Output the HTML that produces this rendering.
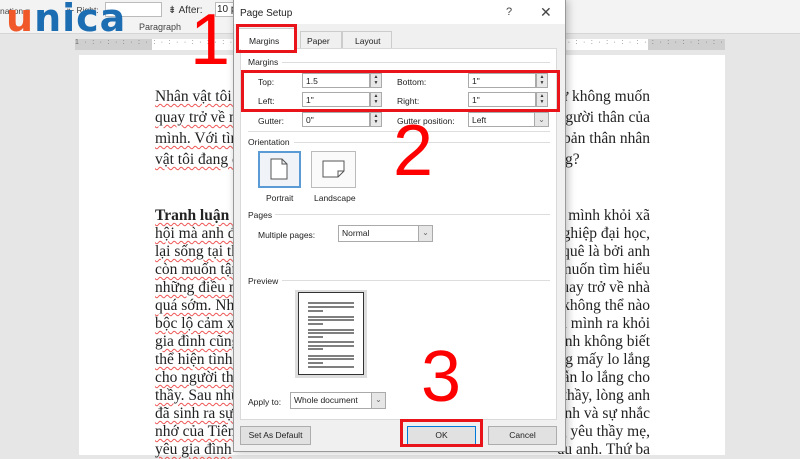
<!DOCTYPE html>
<html><head><meta charset="utf-8"><style>
*{margin:0;padding:0;box-sizing:border-box}
body{width:800px;height:450px;overflow:hidden;position:relative;background:#e6e6e6;font-family:"Liberation Sans",sans-serif}
.a{position:absolute}
.ui{font-family:"Liberation Sans",sans-serif;font-size:8.5px;color:#222;white-space:nowrap}
.doc{font-family:"Liberation Serif",serif;font-size:15.5px;color:#222;white-space:nowrap;line-height:18px;text-decoration:underline wavy #e55;text-decoration-thickness:0.5px;text-underline-offset:2px}
.inp{position:absolute;background:#fff;border:1px solid #aaa;height:15px;font-size:8.5px;padding:2px 3px;color:#222}
.sp{position:absolute;width:12px;height:15px;background:#e8e8e8;border:1px solid #aaa;font-size:5px;line-height:6px;text-align:center;color:#333}
.dd{position:absolute;width:14px;top:0;right:0;bottom:0;background:#e6e6e6;border-left:1px solid #aaa;font-size:8px;text-align:center;color:#666;line-height:14px}
.sec{position:absolute;font-size:8.5px;color:#222;background:#fff;padding-right:4px}
.hr{position:absolute;height:1px;background:#ddd}
.btn{position:absolute;height:19px;background:#e1e1e1;border:1px solid #adadad;font-size:8.5px;text-align:center;line-height:17px;color:#222}
.red{position:absolute;border:3px solid #e8141a}
.num{position:absolute;color:#f00;font-family:"Liberation Sans",sans-serif;font-size:72px;line-height:1}
</style></head><body>
<div class="a" style="left:0;top:0;width:800px;height:34px;background:#f3f3f3;border-bottom:1px solid #d6d6d6"></div>
<div class="a ui" style="left:0;top:6px;color:#444">nation ▾</div>
<div class="a ui" style="left:67px;top:5px;color:#444">⇤ Right:</div>
<div class="a" style="left:105px;top:2px;width:57px;height:15px;background:#fff;border:1px solid #bbb"></div>
<div class="a ui" style="left:168px;top:5px;font-size:10px;color:#333">⇟ After:</div>
<div class="a" style="left:215px;top:2px;width:20px;height:15px;background:#fff;border:1px solid #bbb"></div>
<div class="a ui" style="left:217px;top:4px;font-size:10px">10 p</div>
<div class="a ui" style="left:139px;top:22px;font-size:9px;color:#444">Paragraph</div>
<div class="a" style="left:6px;top:-4px;font-size:38px;font-weight:bold;font-family:'DejaVu Sans',sans-serif;letter-spacing:1px"><span style="color:#f0582a">u</span><span style="color:#1c6db2">nica</span></div>
<div class="a" style="left:75px;top:39px;width:650px;height:11px;background:#fff"></div>
<div class="a" style="left:75px;top:39px;width:77px;height:11px;background:#cfcfcf"></div>
<div class="a" style="left:648px;top:39px;width:77px;height:11px;background:#cfcfcf"></div>
<div class="a ui" style="left:75px;top:39px;width:650px;font-size:7px;color:#666;letter-spacing:5.5px;overflow:hidden">1·:·:·:·:·:·:··:·:·:·:·1·:·:·:·:·:·:·:·:·:·:·:·:·:·:·:·:·:·:·:·:·:·:·:·:·:·:·:·:·:·:··:·:6·:·:·:·:·7·:·:</div>
<div class="a" style="left:79px;top:55px;width:646px;height:400px;background:#fff"></div>
<div class="a" style="left:155px;top:88px;width:495px">
<div class="doc" style="position:relative;height:21px">Nhân vật tôi trở<span style="position:absolute;right:0">ừ không muốn</span></div>
<div class="doc" style="position:relative;height:21px">quay trở về nhà<span style="position:absolute;right:0">người thân của</span></div>
<div class="doc" style="position:relative;height:21px">mình. Với tình<span style="position:absolute;right:0">g bản thân nhân</span></div>
<div class="doc" style="position:relative;height:21px">vật tôi đang cả<span style="position:absolute;left:410px">g?</span></div>
</div>
<div class="a" style="left:155px;top:207px;width:495px">
<div class="doc" style="position:relative;height:18px"><b>Tranh luận 1</b><span style="position:absolute;right:0">h mình khỏi xã</span></div>
<div class="doc" style="position:relative;height:18px">hội mà anh đa<span style="position:absolute;right:0">nghiệp đại học,</span></div>
<div class="doc" style="position:relative;height:18px">lại sống tại thà<span style="position:absolute;right:0">ề quê là bởi anh</span></div>
<div class="doc" style="position:relative;height:18px">còn muốn tận<span style="position:absolute;right:0">muốn tìm hiểu</span></div>
<div class="doc" style="position:relative;height:18px">những điều mà<span style="position:absolute;right:0">quay trở về nhà</span></div>
<div class="doc" style="position:relative;height:18px">quá sớm. Nhâ<span style="position:absolute;right:0">, không thể nào</span></div>
<div class="doc" style="position:relative;height:18px">bộc lộ cảm xú<span style="position:absolute;right:0">ch mình ra khỏi</span></div>
<div class="doc" style="position:relative;height:18px">gia đình cũng<span style="position:absolute;right:0">anh không biết</span></div>
<div class="doc" style="position:relative;height:18px">thể hiện tình c<span style="position:absolute;right:0">ông mấy lo lắng</span></div>
<div class="doc" style="position:relative;height:18px">cho người thầy<span style="position:absolute;right:0">vẫn lo lắng cho</span></div>
<div class="doc" style="position:relative;height:18px">thầy. Sau nhữ<span style="position:absolute;right:0">thầy, lòng anh</span></div>
<div class="doc" style="position:relative;height:18px">đã sinh ra sự l<span style="position:absolute;right:0">ệnh và sự nhắc</span></div>
<div class="doc" style="position:relative;height:18px">nhớ của Tiên<span style="position:absolute;right:0">g yêu thầy mẹ,</span></div>
<div class="doc" style="position:relative;height:18px">yêu gia đình<span style="position:absolute;right:0">àu anh. Thứ ba</span></div>
</div>
<div class="a" style="left:233px;top:0;width:333px;height:452px;background:#f0f0f0;border:1px solid #999;box-shadow:2px 0 8px rgba(0,0,0,.25)"></div>
<div class="a" style="left:234px;top:0;width:331px;height:24px;background:#fff"></div>
<div class="a ui" style="left:240px;top:8px;font-size:10px">Page Setup</div>
<div class="a ui" style="left:506px;top:6px;font-size:11px;color:#444">?</div>
<div class="a ui" style="left:540px;top:4px;font-size:14px;color:#444">✕</div>
<div class="a" style="left:300px;top:31px;width:42px;height:18px;border:1px solid #ccc;background:#f0f0f0"></div>
<div class="a ui" style="left:307px;top:36px">Paper</div>
<div class="a" style="left:342px;top:31px;width:50px;height:18px;border:1px solid #ccc;background:#f0f0f0"></div>
<div class="a ui" style="left:355px;top:36px">Layout</div>
<div class="a" style="left:240px;top:48px;width:317px;height:372px;background:#fff;border:1px solid #d9d9d9"></div>
<div class="a" style="left:238px;top:28px;width:58px;height:21px;background:#fff;border:1px solid #ccc;border-bottom:none"></div>
<div class="a ui" style="left:249px;top:36px">Margins</div>
<div class="sec" style="left:248px;top:57px">Margins</div><div class="hr" style="left:282px;top:62px;width:268px"></div>
<div class="a ui" style="left:258px;top:77px">Top:</div>
<div class="inp" style="left:302px;top:73px;width:68px">1.5</div><div class="sp" style="left:370px;top:73px">▲<br>▼</div>
<div class="a ui" style="left:397px;top:77px">Bottom:</div>
<div class="inp" style="left:468px;top:73px;width:68px">1"</div><div class="sp" style="left:536px;top:73px">▲<br>▼</div>
<div class="a ui" style="left:258px;top:96px">Left:</div>
<div class="inp" style="left:302px;top:92px;width:68px">1"</div><div class="sp" style="left:370px;top:92px">▲<br>▼</div>
<div class="a ui" style="left:397px;top:96px">Right:</div>
<div class="inp" style="left:468px;top:92px;width:68px">1"</div><div class="sp" style="left:536px;top:92px">▲<br>▼</div>
<div class="a ui" style="left:258px;top:116px">Gutter:</div>
<div class="inp" style="left:302px;top:112px;width:68px">0"</div><div class="sp" style="left:370px;top:112px">▲<br>▼</div>
<div class="a ui" style="left:397px;top:116px">Gutter position:</div>
<div class="inp" style="left:468px;top:112px;width:81px">Left<div class="dd">⌄</div></div>
<div class="hr" style="left:248px;top:131px;width:302px"></div>
<div class="sec" style="left:248px;top:137px">Orientation</div><div class="hr" style="left:294px;top:142px;width:256px"></div>
<div class="a" style="left:258px;top:151px;width:43px;height:37px;border:2px solid #5b9bd5;background:#f0f4f8"></div>
<svg class="a" style="left:270px;top:158px" width="18" height="22"><path d="M1 1H12L17 6V21H1Z M12 1V6H17" fill="#fff" stroke="#555" stroke-width="1"/></svg>
<div class="a" style="left:311px;top:151px;width:45px;height:37px;border:1px solid #bbb;background:#fafafa"></div>
<svg class="a" style="left:322px;top:160px" width="24" height="18"><path d="M1 1H22V11L16 17H1Z M16 17V11H22" fill="#fff" stroke="#555"/></svg>
<div class="a ui" style="left:266px;top:193px">Portrait</div>
<div class="a ui" style="left:314px;top:193px">Landscape</div>
<div class="sec" style="left:248px;top:210px">Pages</div><div class="hr" style="left:275px;top:214px;width:275px"></div>
<div class="a ui" style="left:258px;top:230px">Multiple pages:</div>
<div class="inp" style="left:338px;top:225px;width:95px;height:17px">Normal<div class="dd">⌄</div></div>
<div class="sec" style="left:248px;top:276px">Preview</div><div class="hr" style="left:282px;top:280px;width:268px"></div>
<div class="a" style="left:295px;top:290px;width:72px;height:88px;background:#ddd"></div>
<div class="a" style="left:298px;top:292px;width:66px;height:83px;background:#fff;border:1px solid #333"></div>
<svg class="a" style="left:305px;top:300px" width="52" height="70" stroke="#333" stroke-width="1.2">
<path d="M3 3H49M3 7H49M3 11H18M3 17H49M3 20H49M3 24H18M3 30H49M3 33H49M3 37H18M3 42H49M3 46H49M3 49H18M3 56H49M3 59H49M3 63H18M3 67H49"/></svg>
<div class="a ui" style="left:248px;top:397px">Apply to:</div>
<div class="inp" style="left:290px;top:392px;width:96px;height:17px">Whole document<div class="dd">⌄</div></div>
<div class="btn" style="left:240px;top:426px;width:71px">Set As Default</div>
<div class="btn" style="left:407px;top:426px;width:69px;border-color:#0078d7">OK</div>
<div class="btn" style="left:488px;top:426px;width:69px">Cancel</div>
<div class="red" style="left:236px;top:24px;width:61px;height:29px"></div>
<div class="red" style="left:241px;top:70px;width:319px;height:42px"></div>
<div class="red" style="left:400px;top:419px;width:83px;height:28px"></div>
<div class="num" style="left:190px;top:4px">1</div>
<div class="num" style="left:393px;top:115px">2</div>
<div class="num" style="left:421px;top:341px">3</div>
</body></html>
